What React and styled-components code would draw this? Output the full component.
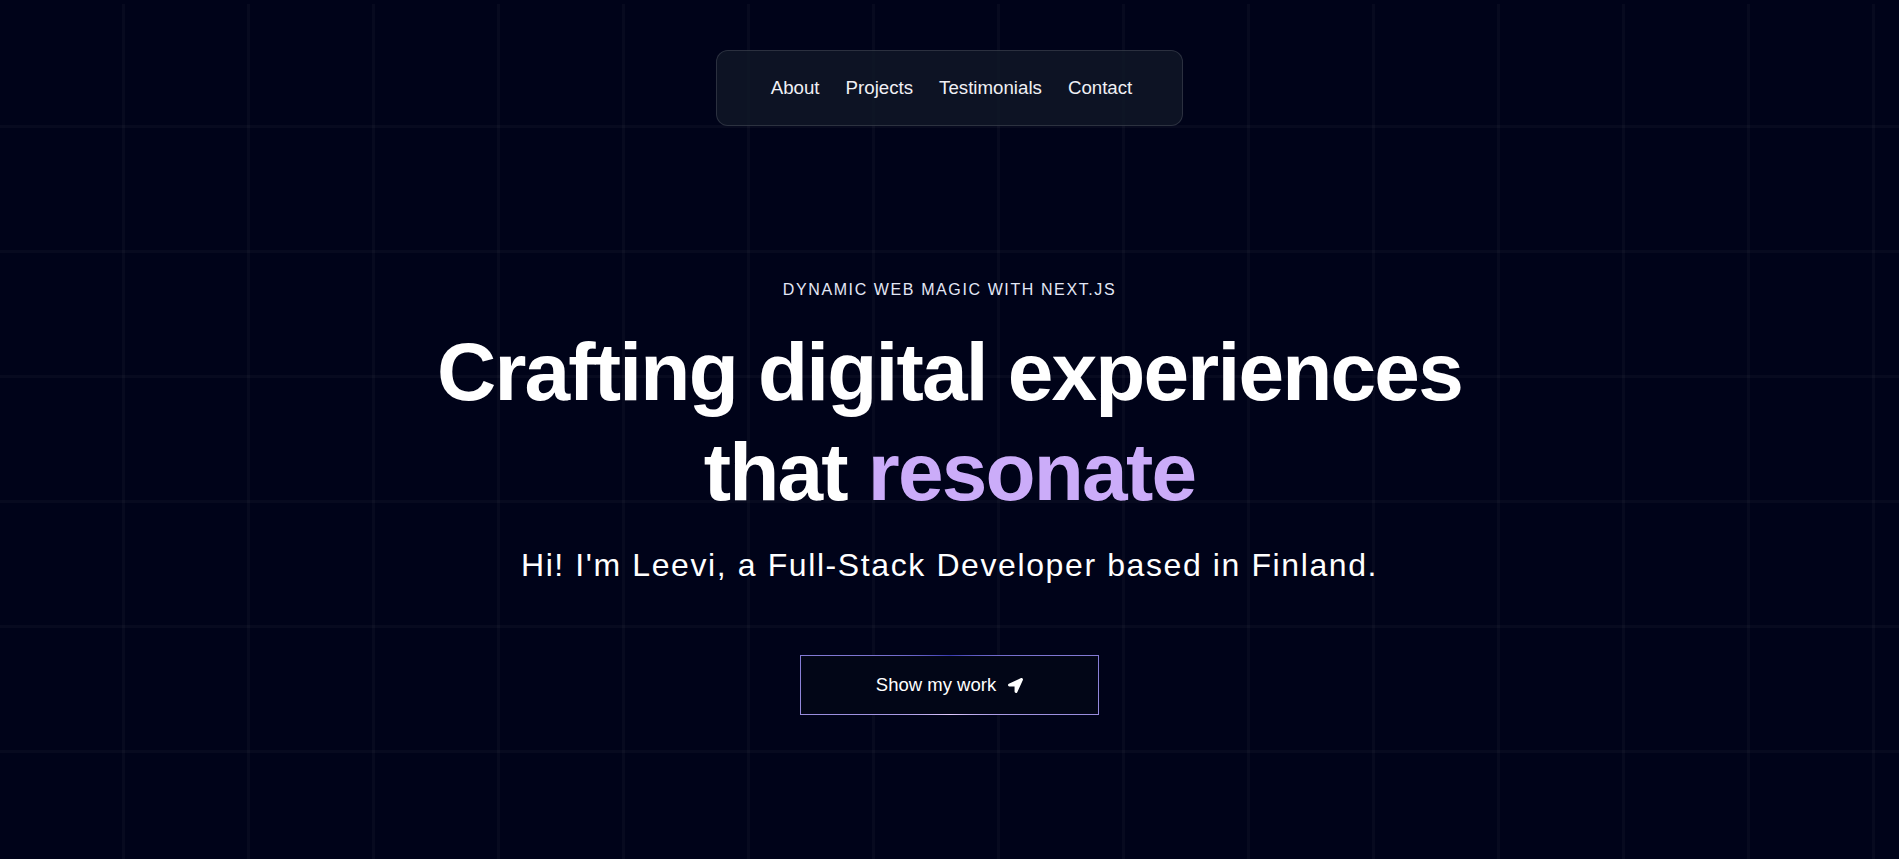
import React from 'react'
import styled, { createGlobalStyle } from 'styled-components'
import { FaLocationArrow } from 'react-icons/fa'

const GlobalStyle = createGlobalStyle`
  html, body {
    margin: 0;
    padding: 0;
    background: #000319;
  }
  * {
    box-sizing: border-box;
  }
`

const Page = styled.main`
  position: relative;
  height: 100vh;
  overflow: hidden;
  display: flex;
  flex-direction: column;
  align-items: center;
  font-family: "Liberation Sans", Arial, sans-serif;
  color: #ffffff;
  background-color: #000319;
  background-image:
    linear-gradient(to bottom, #000319 4px, transparent 4px),
    linear-gradient(to right, rgba(255, 255, 255, 0.026) 3px, transparent 3px),
    linear-gradient(to bottom, rgba(255, 255, 255, 0.026) 3px, transparent 3px);
  background-size: 100% 100%, 125px 125px, 125px 125px;
  background-position: 0 0, 122px 125px, 122px 125px;
`

const Nav = styled.nav`
  margin-top: 50px;
  height: 76px;
  padding: 0 50px 0 54px;
  display: flex;
  align-items: center;
  gap: 26px;
  background: rgba(17, 25, 40, 0.75);
  border: 1px solid rgba(255, 255, 255, 0.125);
  border-radius: 12px;
`

const NavLink = styled.a`
  font-size: 18.7px;
  color: #f0f0f5;
  text-decoration: none;
  cursor: pointer;
`

const Hero = styled.section`
  margin-top: 154px;
  display: flex;
  flex-direction: column;
  align-items: center;
  text-align: center;
`

const Eyebrow = styled.p`
  margin: 0;
  font-size: 16px;
  line-height: 20px;
  letter-spacing: 0.1em;
  text-transform: uppercase;
  color: #e3e7f6;
`

const Title = styled.h1`
  margin: 22px 0 0;
  font-size: 82px;
  line-height: 100px;
  font-weight: 700;
  letter-spacing: -0.022em;
  color: #ffffff;
`

const Accent = styled.span`
  color: #cbacf9;
`

const Intro = styled.p`
  margin: 23px 0 0;
  font-size: 32px;
  line-height: 40px;
  letter-spacing: 0.05em;
  color: #ffffff;
`

const MagicButton = styled.button`
  margin-top: 70px;
  position: relative;
  width: 299px;
  height: 60px;
  padding: 1px;
  border: none;
  overflow: hidden;
  cursor: pointer;
  background: conic-gradient(from 180deg at 50% 50%, #e2cbff 0%, #393bb2 50%, #e2cbff 100%);
`

const ButtonInner = styled.span`
  display: flex;
  align-items: center;
  justify-content: center;
  gap: 12px;
  width: 100%;
  height: 100%;
  background: #020617;
  color: #ffffff;
  font-family: "Liberation Sans", Arial, sans-serif;
  font-size: 18.5px;
`

const links = ['About', 'Projects', 'Testimonials', 'Contact']

export default function App() {
  return (
    <>
      <GlobalStyle />
      <Page>
        <Nav>
          {links.map(l => (
            <NavLink key={l}>{l}</NavLink>
          ))}
        </Nav>

        <Hero>
          <Eyebrow>Dynamic Web Magic with Next.js</Eyebrow>
          <Title>
            Crafting digital experiences
            <br />
            that <Accent>resonate</Accent>
          </Title>
          <Intro>Hi! I'm Leevi, a Full-Stack Developer based in Finland.</Intro>
          <MagicButton>
            <ButtonInner>
              Show my work
              <FaLocationArrow size={15} />
            </ButtonInner>
          </MagicButton>
        </Hero>
      </Page>
    </>
  )
}
